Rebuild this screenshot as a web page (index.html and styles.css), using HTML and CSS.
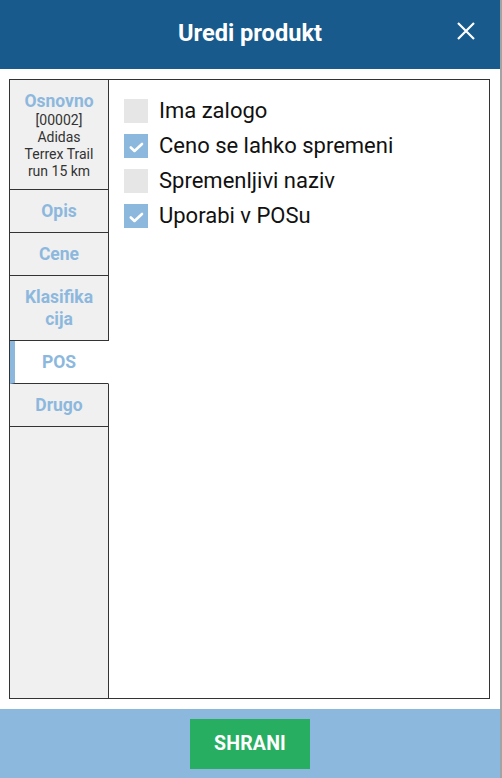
FILE: index.html
```html
<!DOCTYPE html>
<html>
<head>
<meta charset="utf-8">
<link rel="stylesheet" href="styles.css">
</head>
<body>
<div class="dialog">
  <header class="head">
    <h1 class="title">Uredi produkt</h1>
    <button class="close" aria-label="Zapri">
      <svg width="20" height="20" viewBox="0 0 20 20"><path d="M2 2 L18 18 M18 2 L2 18" stroke="#fff" stroke-width="2.2" fill="none"/></svg>
    </button>
  </header>
  <main class="body">
    <div class="panel">
      <nav class="tabs">
        <div class="tab tab-main">
          <div class="tab-label">Osnovno</div>
          <div class="tab-sub">[00002]<br>Adidas<br>Terrex Trail<br>run 15 km</div>
        </div>
        <div class="tab"><div class="tab-label">Opis</div></div>
        <div class="tab"><div class="tab-label">Cene</div></div>
        <div class="tab"><div class="tab-label">Klasifika<br>cija</div></div>
        <div class="tab active"><div class="tab-label">POS</div></div>
        <div class="tab"><div class="tab-label">Drugo</div></div>
        <div class="tab-fill"></div>
      </nav>
      <section class="content">
        <label class="row"><span class="cb"></span><span class="lbl">Ima zalogo</span></label>
        <label class="row"><span class="cb on"><svg width="24" height="24" viewBox="0 0 24 24"><path d="M6.8 13.5 L10.5 17 L18 10" stroke="#fff" stroke-width="2.6" fill="none" stroke-linecap="round" stroke-linejoin="round"/></svg></span><span class="lbl">Ceno se lahko spremeni</span></label>
        <label class="row"><span class="cb"></span><span class="lbl">Spremenljivi naziv</span></label>
        <label class="row"><span class="cb on"><svg width="24" height="24" viewBox="0 0 24 24"><path d="M6.8 13.5 L10.5 17 L18 10" stroke="#fff" stroke-width="2.6" fill="none" stroke-linecap="round" stroke-linejoin="round"/></svg></span><span class="lbl">Uporabi v POSu</span></label>
      </section>
    </div>
  </main>
  <footer class="foot">
    <button class="save">SHRANI</button>
  </footer>
</div>
</body>
</html>
```

FILE: styles.css
```css
* { box-sizing: border-box; }
html, body { margin: 0; padding: 0; }
body {
  background: #a3a3a3;
  font-family: Roboto, "Liberation Sans", sans-serif;
  height: 778px;
  overflow: hidden;
}
.dialog {
  width: 500px;
  height: 778px;
  display: flex;
  flex-direction: column;
  background: #fff;
}
.head {
  height: 69px;
  flex: none;
  background: #175a8b;
  display: flex;
  align-items: center;
  justify-content: center;
  position: relative;
}
.title {
  margin: 0 0 3px;
  color: #fff;
  font-size: 23.6px;
  font-weight: 700;
}
.close {
  position: absolute;
  right: 24px;
  top: 21px;
  width: 20px;
  height: 20px;
  padding: 0;
  border: 0;
  background: none;
  display: flex;
}
.body {
  flex: 1;
  padding: 10px 10px 10px 9px;
  display: flex;
}
.panel {
  flex: 1;
  border: 1px solid #333;
  display: flex;
}
.tabs {
  width: 99px;
  flex: none;
  display: flex;
  flex-direction: column;
  background: #f0f0f0;
}
.tab {
  border-right: 1px solid #333;
  border-bottom: 1px solid #333;
  padding: 10px 0;
  text-align: center;
}
.tab-label {
  color: #8db8de;
  font-weight: 700;
  font-size: 17.5px;
  line-height: 22px;
}
.tab-main { padding: 10px 0 9px; }
.tab-sub {
  font-size: 14px;
  line-height: 17px;
  color: #333;
}
.tab.active {
  background: #fff;
  border-right-color: #fff;
  border-left: 5px solid #8db8de;
  padding-right: 5px;
}
.tab-fill {
  flex: 1;
  border-right: 1px solid #333;
}
.content {
  flex: 1;
  padding: 13px 15px;
  display: flex;
  flex-direction: column;
}
.row {
  height: 35px;
  display: flex;
  align-items: center;
}
.cb {
  width: 24px;
  height: 24px;
  background: #e6e6e6;
  margin-right: 11px;
  display: flex;
  flex: none;
}
.cb.on { background: #8db8de; }
.lbl {
  font-size: 22px;
  color: #111;
}
.foot {
  height: 69px;
  flex: none;
  background: #8db8de;
  display: flex;
  justify-content: center;
  align-items: center;
}
.save {
  width: 120px;
  height: 50px;
  background: #27ae60;
  color: #fff;
  border: 0;
  font-family: Roboto, "Liberation Sans", sans-serif;
  font-weight: 700;
  font-size: 19.5px;
  letter-spacing: 0.2px;
}
```
